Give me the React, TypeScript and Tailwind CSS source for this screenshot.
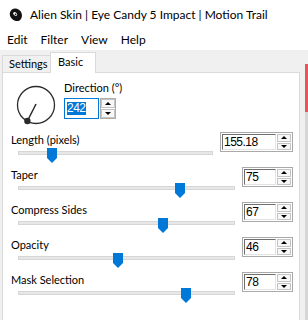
import type { ReactNode } from "react";

type Row = {
  label: string;
  value: string;
  trackWidth: number;
  thumb: number;
  boxWidth: number;
};

const rows: Row[] = [
  { label: "Length (pixels)", value: "155.18", trackWidth: 195, thumb: 33, boxWidth: 73 },
  { label: "Taper", value: "75", trackWidth: 217, thumb: 161, boxWidth: 51 },
  { label: "Compress Sides", value: "67", trackWidth: 217, thumb: 144, boxWidth: 51 },
  { label: "Opacity", value: "46", trackWidth: 217, thumb: 99, boxWidth: 51 },
  { label: "Mask Selection", value: "78", trackWidth: 217, thumb: 167, boxWidth: 51 },
];

function Arrows() {
  return (
    <div className="flex w-[14px] flex-col gap-[1px]">
      <div className="flex flex-1 items-center justify-center border border-[#c4c4c4] bg-[#f7f7f7]">
        <div className="h-0 w-0 border-x-[3px] border-b-[3px] border-x-transparent border-b-black" />
      </div>
      <div className="flex flex-1 items-center justify-center border border-[#c4c4c4] bg-[#f7f7f7]">
        <div className="h-0 w-0 border-x-[3px] border-t-[3px] border-x-transparent border-t-black" />
      </div>
    </div>
  );
}

function SpinBox({ value, width }: { value: string; width: number }) {
  return (
    <div
      className="flex h-[20px] gap-[1px] border border-[#a9a9a9] bg-white p-[1px]"
      style={{ width }}
    >
      <div className="flex flex-1 items-center border border-[#6e6e6e] border-b-[#e3e3e3] border-r-[#e3e3e3] pl-[1px] font-['Liberation_Sans',sans-serif] text-[12px] tracking-[-0.5px]">
        {value}
      </div>
      <Arrows />
    </div>
  );
}

function Thumb({ left }: { left: number }) {
  return (
    <svg
      width="10"
      height="15"
      viewBox="0 0 10 15"
      className="absolute top-[-4px]"
      style={{ left: left - 5 }}
    >
      <path d="M0 0 H10 V10 L5 15 L0 10 Z" fill="#0078d7" />
    </svg>
  );
}

function SliderRow({ row }: { row: Row }) {
  return (
    <div className="flex h-[35px] items-start justify-between pr-[6px]">
      <div className="flex flex-col">
        <div className="pl-[8px] text-[11px] leading-[16px]">{row.label}</div>
        <div
          className="relative ml-[15px] mt-[3px] h-[4px] border border-[#d6d6d6] bg-[#e7e7e7]"
          style={{ width: row.trackWidth }}
        >
          <Thumb left={row.thumb} />
        </div>
      </div>
      <SpinBox value={row.value} width={row.boxWidth} />
    </div>
  );
}

function Tab({ children, active }: { children: ReactNode; active?: boolean }) {
  return active ? (
    <div className="relative z-10 mb-[-1px] flex h-[21px] w-[46px] items-start border border-b-0 border-[#d9d9d9] bg-white pl-[7px] pt-[2px] text-[11px] leading-[14px]">
      {children}
    </div>
  ) : (
    <div className="flex h-[17px] w-[48px] items-center border border-r-0 border-b-0 border-[#d9d9d9] bg-[#f0f0f0] pl-[6px] text-[11px]">
      {children}
    </div>
  );
}

function Dial() {
  return (
    <svg width="42" height="42" viewBox="0 0 42 42" className="mt-[4px] shrink-0">
      <circle cx="21" cy="21" r="18.5" fill="none" stroke="#2b2b2b" strokeWidth="1.3" />
      <line x1="21" y1="20" x2="12.4" y2="37" stroke="#2b2b2b" strokeWidth="1.5" />
      <circle cx="12.4" cy="37" r="3.2" fill="#2b2b2b" />
    </svg>
  );
}

function Logo() {
  return (
    <svg width="14" height="14" viewBox="0 0 14 14">
      <path
        d="M3 1.5 C6 -0.5 11 1 12.5 5 C14 9 11.5 13.5 7.5 13 C3.5 12.5 0.5 9 0.8 5.5 C1 3.8 1.8 2.3 3 1.5 Z"
        fill="#111"
      />
      <ellipse cx="6.2" cy="6" rx="2.2" ry="1.6" fill="#fff" transform="rotate(35 6.2 6)" />
      <circle cx="6.6" cy="6.3" r="0.9" fill="#111" />
    </svg>
  );
}

export default function App() {
  return (
    <div className="flex h-[320px] w-[308px] flex-col overflow-hidden bg-[#f0f0f0] font-['Lato',sans-serif] text-black">
      <div className="flex h-[30px] items-center gap-[7px] bg-white pl-[9px]">
        <Logo />
        <span className="text-[12px]">Alien Skin | Eye Candy 5 Impact | Motion Trail</span>
      </div>

      <div className="flex h-[20px] items-center gap-[13px] bg-white pl-[7px] text-[12px]">
        <span>Edit</span>
        <span>Filter</span>
        <span>View</span>
        <span>Help</span>
      </div>

      <div className="flex min-h-0 flex-1">
        <div className="flex w-[300px] flex-col pl-[2px]">
          <div className="flex h-[22px] items-end">
            <Tab>Settings</Tab>
            <Tab active>Basic</Tab>
          </div>

          <div className="flex-1 border border-b-0 border-[#dadada] bg-white">
            <div className="mt-[7px] flex items-start pl-[12px]">
              <Dial />
              <div className="ml-[7px] flex flex-col">
                <div className="text-[11px] leading-[16px]">Direction (°)</div>
                <div className="mt-[2px] flex h-[21px] gap-[1px]">
                  <div className="flex w-[35px] items-center border border-[#0078d7] bg-white pl-[2px]">
                    <span className="bg-[#0078d7] font-['Liberation_Sans',sans-serif] text-[12px] leading-[13px] tracking-[-0.5px] text-white">
                      242
                    </span>
                  </div>
                  <div className="flex border border-[#adadad]">
                    <Arrows />
                  </div>
                </div>
              </div>
            </div>

            <div className="mt-[6px] flex flex-col">
              {rows.map((r) => (
                <SliderRow key={r.label} row={r} />
              ))}
            </div>
          </div>
        </div>

        <div className="flex flex-1 pl-[5px] pt-[14px]">
          <div className="flex w-[3px] flex-col">
            <div className="h-[48px] bg-[#e8545a]" />
            <div className="flex-1 bg-[#d6d6d6]" />
          </div>
        </div>
      </div>
    </div>
  );
}
